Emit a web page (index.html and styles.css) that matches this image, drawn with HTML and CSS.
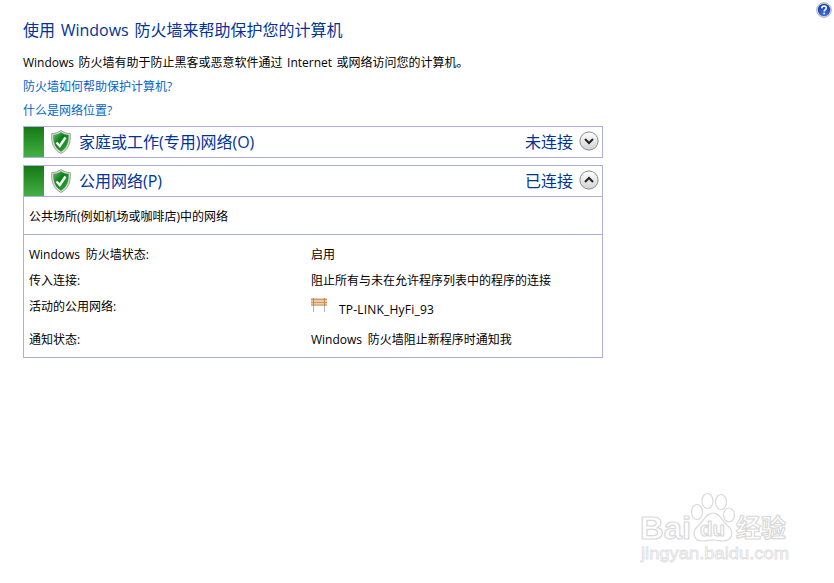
FILE: index.html
```
<!DOCTYPE html>
<html lang="zh-CN">
<head>
    <meta charset="UTF-8">
    <title>Windows 防火墙</title>
    <link rel="stylesheet" href="styles.css">
</head>
<body>
    <svg class="defs" width="0" height="0">
        <defs>
            <linearGradient id="green" x1="0" y1="0" x2="1" y2="1">
                <stop offset="0" stop-color="#6cbc6c"/>
                <stop offset="0.4" stop-color="#0c8018"/>
                <stop offset="1" stop-color="#2fae35"/>
            </linearGradient>
            <linearGradient id="silver" x1="0" y1="0" x2="0" y2="1">
                <stop offset="0" stop-color="#ffffff"/>
                <stop offset="1" stop-color="#d2d2d2"/>
            </linearGradient>
            <radialGradient id="blue" cx="0.5" cy="0.8" r="0.7">
                <stop offset="0" stop-color="#3f78e0"/>
                <stop offset="1" stop-color="#1b3fa8"/>
            </radialGradient>
            <symbol id="shield" viewBox="0 0 20 24">
                <path d="M10 .5C7.500 2.500 4 3.500 .8 3.600C.1 13 2.500 19.500 10 23.500C17.500 19.500 19.900 13 19.200 3.600C16 3.500 12.500 2.500 10 .5Z" fill="#dfe2df" stroke="#9a9e9a"/>
                <path d="M10 2.500C8 4 5 5 2.500 5.100C2.300 12.500 4 18 10 21.500C16 18 17.700 12.500 17.500 5.100C15 5 12 4 10 2.500Z" fill="url(#green)" stroke="#4c9a50" stroke-width=".5"/>
                <path d="M5.500 12.500L8.800 16L14.500 7.500" fill="none" stroke="#fff" stroke-width="2.400"/>
            </symbol>
        </defs>
    </svg>

    <svg class="help" viewBox="0 0 16 16">
        <circle cx="8" cy="8" r="7.400" fill="#d9dde6" stroke="#a2a8b5" stroke-width=".8"/>
        <circle cx="8" cy="8" r="6.200" fill="url(#blue)"/>
        <path d="M5.800 6.300C5.800 3.300 10.300 3.300 10.300 6C10.300 7.500 8.200 7.600 8.200 9.400M8.200 10.700V12.300" fill="none" stroke="#fff" stroke-width="1.600"/>
    </svg>

    <div class="container">
        <h1>使用 Windows 防火墙来帮助保护您的计算机</h1>
        <p class="intro">Windows 防火墙有助于防止黑客或恶意软件通过 Internet 或网络访问您的计算机。</p>
        <a href="#">防火墙如何帮助保护计算机?</a>
        <a href="#">什么是网络位置?</a>

        <div class="panel">
            <div class="header">
                <span class="bar"></span>
                <svg class="shield"><use href="#shield"/></svg>
                <h2>家庭或工作(专用)网络(O)</h2>
                <span class="estado">未连接</span>
                <svg class="toggle" viewBox="0 0 20 20">
                    <circle cx="10" cy="10" r="9.100" fill="url(#silver)" stroke="#8a8a8a"/>
                    <path d="M6 8L10 12L14 8" fill="none" stroke="#222" stroke-width="2"/>
                </svg>
            </div>
        </div>

        <div class="panel">
            <div class="header">
                <span class="bar"></span>
                <svg class="shield"><use href="#shield"/></svg>
                <h2>公用网络(P)</h2>
                <span class="estado">已连接</span>
                <svg class="toggle" viewBox="0 0 20 20">
                    <circle cx="10" cy="10" r="9.100" fill="url(#silver)" stroke="#8a8a8a"/>
                    <path d="M6 12L10 8L14 12" fill="none" stroke="#222" stroke-width="2"/>
                </svg>
            </div>
            <p class="desc">公共场所(例如机场或咖啡店)中的网络</p>
            <dl class="details">
                <dt>Windows 防火墙状态:</dt>
                <dd>启用</dd>
                <dt>传入连接:</dt>
                <dd>阻止所有与未在允许程序列表中的程序的连接</dd>
                <dt>活动的公用网络:</dt>
                <dd class="network">
                    <svg class="bench" viewBox="0 0 16 15">
                        <path d="M2.500 8V14M13.500 8V14" stroke="#a9b5cb"/>
                        <path d="M0 1.500H16M0 4.500H16" stroke="#d29a5c" stroke-width="2"/>
                        <path d="M0 7H16" stroke="#d9b78f" stroke-width="2"/>
                        <path d="M2.500 0V8M13.500 0V8" stroke="#b98b5c"/>
                    </svg>
                    <span>TP-LINK_HyFi_93</span>
                </dd>
                <dt class="last">通知状态:</dt>
                <dd class="last">Windows 防火墙阻止新程序时通知我</dd>
            </dl>
        </div>
    </div>

    <svg class="watermark" viewBox="0 0 160 80">
        <g class="outline">
            <text x="0" y="49" font-size="32" textLength="51" lengthAdjust="spacingAndGlyphs">Bai</text>
            <ellipse cx="57" cy="22" rx="5.500" ry="7.500"/>
            <ellipse cx="67.500" cy="11" rx="5.500" ry="7.500"/>
            <ellipse cx="81" cy="12" rx="5.500" ry="7.500"/>
            <ellipse cx="89" cy="25" rx="5.500" ry="7"/>
            <path d="M73 23C66 23 64 31 58 36C51 42 54 51 62 51C67 51 69 50 73 50C77 50 79 51 83 51C92 51 95 42 88 36C82 31 80 23 73 23Z"/>
            <text x="60" y="46" font-size="21" textLength="25" lengthAdjust="spacingAndGlyphs">du</text>
            <text class="cjk" x="96" y="47" font-size="25">经验</text>
        </g>
        <text class="url" x="1" y="69" textLength="148" lengthAdjust="spacingAndGlyphs">jingyan.baidu.com</text>
    </svg>
</body>
</html>
```

FILE: styles.css
```
* {
    margin: 0;
    padding: 0;
    box-sizing: border-box;
}

body {
    font-family: "Open Sans", "Noto Sans CJK SC", sans-serif;
    font-size: 12px;
    line-height: 24px;
    color: #000;
    background: #fff;
    height: 583px;
    overflow: hidden;
}

.defs {
    position: absolute;
}

.help {
    position: absolute;
    top: 2px;
    right: 2px;
    width: 16px;
    height: 16px;
}

.container {
    width: 580px;
    margin-left: 23px;
    padding-top: 18px;
    white-space: nowrap;
}

h1 {
    font-size: 16px;
    font-weight: normal;
    color: #003399;
    word-spacing: 1.5px;
}

.intro {
    margin-top: 9px;
    word-spacing: 1.4px;
}

a {
    display: block;
    color: #0066cc;
    text-decoration: none;
}

.panel {
    border: 1px solid #aeaed9;
    margin-bottom: 7px;
}

a + .panel {
    margin-top: 3px;
}

.header {
    display: flex;
    align-items: center;
    height: 30px;
    font-size: 16px;
    color: #003399;
}

.bar {
    width: 20px;
    height: 30px;
    background: linear-gradient(#177817, #43b043);
}

.shield {
    width: 20px;
    height: 24px;
    margin: 0 8px 0 7px;
}

h2 {
    flex: 1;
    font-size: 16px;
    font-weight: normal;
}

.toggle {
    width: 20px;
    height: 20px;
    margin: 0 3px 2px 6px;
}

.desc {
    height: 39px;
    padding: 8px 5px 0;
    border-top: 1px solid #aeaed9;
    border-bottom: 1px solid #aeaed9;
}

.details {
    display: grid;
    grid-template-columns: 282px 1fr;
    grid-template-rows: 26px 26px 32px 26px;
    padding: 8px 5px 4px;
    word-spacing: 2.5px;
}

.network {
    display: flex;
    padding-top: 3px;
    letter-spacing: 0.2px;
}

.bench {
    width: 16px;
    height: 15px;
    margin-right: 12px;
}

.last {
    padding-top: 1px;
}

.watermark {
    position: absolute;
    left: 640px;
    top: 490px;
    width: 160px;
    height: 80px;
    font-family: "Liberation Sans", sans-serif;
    font-weight: bold;
}

.outline {
    fill: #fff;
    stroke: #d9d9d9;
    stroke-width: 1.2;
}

.cjk {
    font-family: "Noto Sans CJK SC", sans-serif;
}

.url {
    font-family: "Liberation Sans", sans-serif;
    font-size: 17px;
    font-weight: normal;
    fill: #fafafa;
    stroke: #e0e0e0;
    stroke-width: 0.8;
}
```
